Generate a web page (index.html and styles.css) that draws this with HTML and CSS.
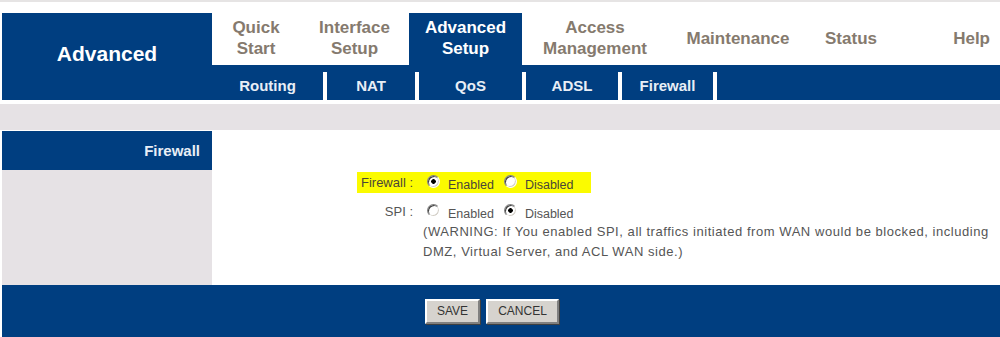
FILE: index.html
```html
<!DOCTYPE html>
<html lang="en">
  <head>
    <meta charset="UTF-8" />
    <title>Advanced Setup - Firewall</title>
    <link rel="stylesheet" href="styles.css">
  </head>
  <body>
    <div class="topline"></div>
    <div class="header">
      <div class="brand">Advanced</div>
      <div class="nav">
        <div class="topnav">
          <a class="tab t-quick">Quick<br />Start</a>
          <a class="tab t-iface">Interface<br />Setup</a>
          <a class="tab t-adv active">Advanced<br />Setup</a>
          <a class="tab t-access">Access<br />Management</a>
          <a class="tab t-maint">Maintenance</a>
          <a class="tab t-status">Status</a>
          <a class="tab t-help">Help</a>
        </div>
        <div class="subnav">
          <a class="sub s-routing">Routing</a>
          <a class="sub s-nat">NAT</a>
          <a class="sub s-qos">QoS</a>
          <a class="sub s-adsl">ADSL</a>
          <a class="sub s-fw">Firewall</a>
        </div>
      </div>
    </div>

    <div class="band"></div>

    <div class="main">
      <div class="side">
        <div class="side-title">Firewall</div>
      </div>
      <form class="content">
        <div class="field hl">
          <div class="label"><span class="label-text">Firewall :</span></div>
          <div class="opts">
            <input type="radio" name="fw" checked /><span class="opt">Enabled</span>
            <input type="radio" name="fw" /><span class="opt">Disabled</span>
          </div>
        </div>
        <div class="field">
          <div class="label"><span class="label-text">SPI :</span></div>
          <div class="opts">
            <input type="radio" name="spi" /><span class="opt">Enabled</span>
            <input type="radio" name="spi" checked /><span class="opt">Disabled</span>
          </div>
        </div>
        <p class="warning">
          (WARNING: If You enabled SPI, all traffics initiated from WAN would be blocked, including<br />
          DMZ, Virtual Server, and ACL WAN side.)
        </p>
      </form>
    </div>

    <div class="footer">
      <button type="button" class="btn">SAVE</button>
      <button type="button" class="btn">CANCEL</button>
    </div>
  </body>
</html>
```

FILE: styles.css
```css
body {
  font-family: "Liberation Sans", Arial, sans-serif;
  margin: 0;
  padding: 0 0 0 2px;
  background-color: #fff;
  width: 998px;
  height: 337px;
  overflow: hidden;
}

.topline {
  height: 2px;
  margin-left: -2px;
  background-color: #e6e4e4;
  margin-bottom: 11px;
}

/* header: brand block + two rows of menus */
.header {
  display: grid;
  grid-template-columns: 210px 1fr;
  height: 87px;
}

.brand {
  background-color: #003e80;
  color: #fff;
  font-weight: bold;
  font-size: 21px;
  display: flex;
  align-items: center;
  justify-content: center;
  padding-bottom: 6px;
}

.nav {
  display: flex;
  flex-direction: column;
}

.topnav {
  display: flex;
  height: 52px;
}

.tab {
  display: flex;
  align-items: center;
  justify-content: center;
  text-align: center;
  color: #857a6e;
  font-weight: bold;
  font-size: 17px;
  line-height: 21px;
  padding-bottom: 2px;
}

.tab.active {
  background-color: #003e80;
  color: #fff;
}

.t-quick { width: 88px; }
.t-iface { width: 109px; }
.t-adv { width: 113px; }
.t-access { width: 146px; }
.t-maint { width: 140px; }
.t-status { width: 86px; }
.t-help {
  flex: 1;
  justify-content: flex-end;
  padding-right: 10px;
}

.subnav {
  display: flex;
  height: 35px;
  padding-top: 7px;
  box-sizing: border-box;
  background-color: #003e80;
}

.sub {
  display: flex;
  align-items: center;
  justify-content: center;
  color: #e8eef6;
  font-weight: bold;
  font-size: 15px;
  border-right: 4px solid #fff;
  padding-bottom: 1px;
}

.s-routing { width: 111px; }
.s-nat { width: 88px; }
.s-qos { width: 103px; }
.s-adsl { width: 92px; }
.s-fw { width: 91px; }

.band {
  height: 26px;
  margin: 4px 0 0 -2px;
  background-color: #e6e2e5;
}

/* main area */
.main {
  display: grid;
  grid-template-columns: 210px 1fr;
  height: 154px;
  margin-top: 1px;
}

.side {
  background-color: #e6e2e5;
}

.side-title {
  height: 39px;
  background-color: #003e80;
  color: #e8eef6;
  font-weight: bold;
  font-size: 15px;
  text-align: right;
  padding: 11px 12px 0 0;
  box-sizing: border-box;
}

.content {
  padding-top: 41px;
  font-size: 13px;
  color: #555;
}

.field {
  display: flex;
  align-items: center;
  height: 21px;
  margin-bottom: 8px;
}

.label {
  width: 201px;
  text-align: right;
}

.label-text {
  padding: 3px 0 3px 4px;
}

.field.hl .label-text,
.field.hl .opts {
  background-color: #fbfb00;
  color: #4a4638;
}

.opts {
  display: flex;
  align-items: center;
  height: 21px;
  padding: 0 10px 0 14px;
}

.field.hl .opts {
  padding-right: 17px;
}

.opts input[type="radio"] {
  appearance: none;
  -webkit-appearance: none;
  width: 13px;
  height: 13px;
  margin: 0 8px 3px 0;
  border-radius: 50%;
  border: 1px solid;
  border-color: #808080 #fff #fff #808080;
  box-shadow: inset 1px 1px 0 #404040, inset -1px -1px 0 #d4d0c8;
  background: #fff;
  box-sizing: border-box;
}

.opts input[type="radio"]:checked {
  background: radial-gradient(circle, #000 0 2px, #fff 2.6px);
}

.opt {
  padding-top: 5px;
  margin-right: 10px;
  font-size: 12.5px;
}

.opt:last-child {
  margin-right: 0;
}

.warning {
  margin: -8px 0 0 211px;
  font-size: 13px;
  letter-spacing: 0.55px;
  line-height: 20px;
  color: #555;
}

/* footer with buttons */
.footer {
  height: 52px;
  background-color: #003e80;
  display: flex;
  align-items: center;
  gap: 6px;
  padding-left: 423px;
}

.btn {
  font-family: "Liberation Sans", Arial, sans-serif;
  font-size: 12px;
  color: #333;
  background-color: #d6d3ce;
  height: 25px;
  padding: 0 10px;
  border: 2px solid;
  border-color: #fff #808080 #808080 #fff;
  box-shadow: 1px 1px 0 #404040;
}
```
